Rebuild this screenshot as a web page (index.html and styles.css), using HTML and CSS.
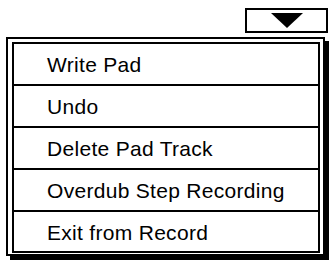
FILE: index.html
```html
<!DOCTYPE html>
<html>
<head>
<meta charset="utf-8">
<link rel="stylesheet" href="styles.css">
</head>
<body>
<div class="top">
  <div class="dropbtn"><span class="tri"></span></div>
</div>
<div class="menu">
  <div class="inner">
    <div class="item">Write Pad</div>
    <div class="item">Undo</div>
    <div class="item">Delete Pad Track</div>
    <div class="item">Overdub Step Recording</div>
    <div class="item">Exit from Record</div>
  </div>
</div>
</body>
</html>
```
FILE: styles.css
```css
html, body {
  margin: 0;
  padding: 0;
  background: #fff;
}
body {
  width: 332px;
  height: 260px;
  overflow: hidden;
  font-family: "Liberation Sans", Arial, sans-serif;
  color: #000;
}
.top {
  display: flex;
  justify-content: flex-end;
  padding: 8px 4px 0 0;
}
.dropbtn {
  box-sizing: border-box;
  width: 83px;
  height: 25px;
  border: 2px solid #000;
  display: flex;
  justify-content: center;
  padding-top: 3px;
}
.tri {
  width: 0;
  height: 0;
  border-left: 16px solid transparent;
  border-right: 16px solid transparent;
  border-top: 15px solid #000;
}
.menu {
  box-sizing: border-box;
  margin: 4px 0 0 6px;
  width: 319px;
  border: 2px solid #000;
  box-shadow: 4px 4px 0 #000;
  padding: 3px 3px 1px 4px;
}
.inner {
  border: 2px solid #000;
  display: flex;
  flex-direction: column;
}
.item {
  box-sizing: border-box;
  height: 42px;
  display: flex;
  align-items: center;
  padding-left: 33px;
  padding-top: 2px;
  font-size: 21px;
  letter-spacing: 0.3px;
  border-bottom: 2px solid #000;
}
.item:last-child {
  border-bottom: none;
  height: 39px;
}
```
